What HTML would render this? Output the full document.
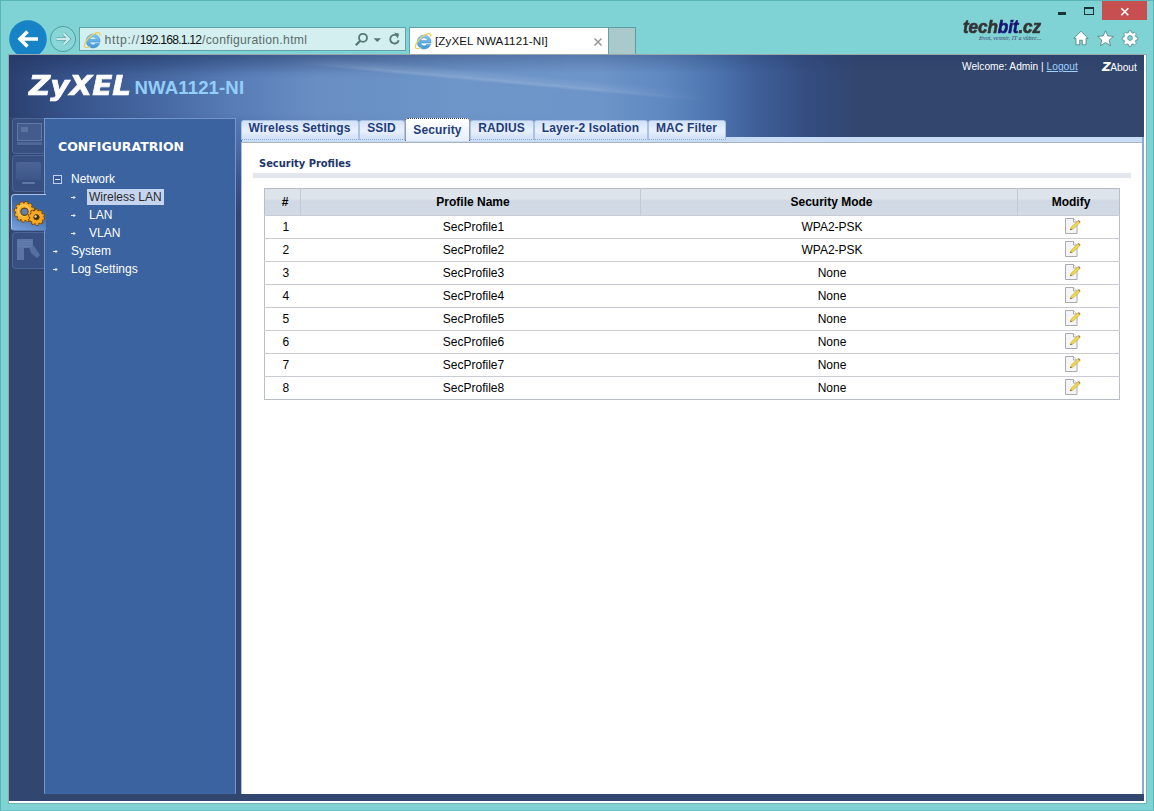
<!DOCTYPE html>
<html lang="en">
<head>
<meta charset="utf-8">
<title>[ZyXEL NWA1121-NI]</title>
<style>
*{box-sizing:border-box;margin:0;padding:0}
html,body{width:1154px;height:811px;overflow:hidden}
body{position:relative;background:#80d3d4;font-family:"Liberation Sans",sans-serif;font-size:12px;color:#000}
.abs{position:absolute}
#frame{left:0;top:0;width:1154px;height:811px;border:1px solid #58b5b8;border-bottom-color:#6cc4c6}
/* browser chrome */
#closebtn{left:1102px;top:1px;width:45px;height:19px;background:#c84f4f}
#addr{left:79px;top:27px;width:327px;height:24px;background:#d3efef;border:1px solid #62a3a7;font-family:"Liberation Sans",sans-serif;font-size:12.200px;color:#5b6b6b;line-height:24px;white-space:nowrap}
#addr span.h{color:#111}
#tab{left:409px;top:27px;width:200px;height:28px;background:#fff;border:1px solid #62a3a7;border-bottom:none;font-size:11.600px;line-height:26px;color:#111;white-space:nowrap}
#newtab{left:609px;top:27px;width:27px;height:27px;background:#a9c9ca;border:1px solid #5a9ea2;border-left:none;border-bottom:none}
#viewport{left:8px;top:54px;width:1139px;height:750px;background:#fff;border:1px solid #9aa6a8;border-right-color:#6fb6b8;border-bottom-color:#6fb6b8;overflow:hidden}

#wm{left:963px;top:14.800px;font-family:"Liberation Sans",sans-serif;font-weight:bold;font-style:italic;font-size:18px;line-height:24px;color:#333;letter-spacing:-.1px;white-space:nowrap;transform-origin:0 0;transform:scaleX(.95);-webkit-text-stroke:.6px currentColor}
#wm span{color:#171773}
#wm2{left:979px;top:34px;font-family:"Liberation Serif",serif;font-style:italic;font-size:6px;line-height:8px;color:#3a3f6a;white-space:nowrap}
.ib{width:32px;border:1px solid #4a6598;border-right:none;border-radius:4px 0 0 4px;background:#38507f}
#actic{left:2px;top:139px;width:35px;height:37px;border:1px solid #a9c4ea;border-right:none;border-bottom-color:#5377b4;border-radius:4px 0 0 4px;background:linear-gradient(20deg,#7aa3dc 0%,#4a74b4 45%,#3a63a0 70%)}
/* page */
#page{left:0;top:0;width:1135px;height:746px;background:#32476f}
#hdr{left:0;top:0;width:1135px;height:82px;background:linear-gradient(90deg,#2b406f 0,#36528a 5%,#44659f 12%,#587db7 20%,#688ec4 27%,#6e96c9 40%,#6d95c9 52%,#5f88c0 57.800%,#4c73ae 62.400%,#3f5f99 65.800%,#344d80 70.400%,#32466e 75%,#32466e 100%)}
#hdr2{left:0;top:0;width:560px;height:82px;background:linear-gradient(180deg,rgba(38,58,104,.55) 0%,rgba(38,58,104,0) 28%,rgba(38,58,104,0) 70%,rgba(38,58,104,.25) 100%);-webkit-mask-image:linear-gradient(90deg,#000 0,#000 20%,transparent 100%);mask-image:linear-gradient(90deg,#000 0,#000 20%,transparent 100%)}
#hdr3{left:0;top:0;width:1135px;height:82px;background:linear-gradient(180deg,rgba(35,55,100,.28) 0,rgba(35,55,100,0) 22%)}
#streak{left:285px;top:-2px;width:420px;height:12px;transform-origin:0 0;transform:rotate(5.200deg);background:linear-gradient(180deg,rgba(255,255,255,0),rgba(255,255,255,.10) 60%,rgba(255,255,255,.16) 75%,rgba(255,255,255,0));-webkit-mask-image:linear-gradient(90deg,transparent,#000 20%,#000 70%,transparent)}
#logo{left:20px;top:11px;font-family:"DejaVu Sans",sans-serif;font-weight:bold;font-style:italic;font-size:26.500px;color:#fff;letter-spacing:0px;line-height:40px;white-space:nowrap;transform-origin:0 0;transform:scaleX(1.11);-webkit-text-stroke:.7px #fff}
#model{left:125.500px;top:21.500px;font-weight:bold;font-size:18.600px;color:#93cff9;line-height:22px;white-space:nowrap;letter-spacing:.12px}
#welcome{left:953px;top:6px;font-size:10.200px;color:#fff;line-height:12px;white-space:nowrap}
#welcome a{color:#9fd0ff;text-decoration:underline}
#about{left:1093px;top:6px;font-size:10.200px;color:#fff;line-height:12px;white-space:nowrap}
#iconcol{left:0;top:62px;width:35px;height:684px;background:#32476f}
#side{left:35px;top:63px;width:192px;height:676px;background:#3a63a0;border:1px solid #7195cc;border-bottom-color:#3f67a4}
#gap{left:227px;top:63px;width:6px;height:676px;background:linear-gradient(180deg,#5378b2 0,#4a6ca6 4%,#3b568c 9%,#32476f 14%,#32476f 100%)}
#cl{left:232px;top:87px;width:1px;height:652px;background:#a9c1e6}
#content{left:233px;top:87px;width:901px;height:652px;background:#fff}
#tabstrip{left:233px;top:82px;width:901px;height:6px;background:#c9dcf6}
#rightline{left:1133px;top:82px;width:2px;height:657px;background:#8fa8cf}
#grayline{left:233px;top:87px;width:900px;height:1px;background:#aab2be}
.stitle{font-family:"Liberation Serif","DejaVu Sans",sans-serif}
#cfg{left:13px;top:21px;font-family:"DejaVu Sans",sans-serif;font-weight:bold;font-size:12.500px;color:#fff;white-space:nowrap;line-height:14px}
.nav{color:#fff;font-size:12px;line-height:14px;white-space:nowrap}
.tabs{left:232px;top:65px;height:21px;white-space:nowrap}
.t{position:absolute;top:0;height:20px;background:linear-gradient(180deg,#d3e2f8 0%,#e8f0fc 55%,#cfe0f8 100%);border:1px solid #a9c3e6;border-bottom:1px dotted #8eaad2;border-radius:3px 3px 0 0;font-weight:bold;font-size:12px;color:#1f3d78;text-align:center;line-height:15px;padding-right:1px;letter-spacing:.12px}
.t.act{background:linear-gradient(180deg,#fff 0%,#e6effc 100%);border:1px dotted #444;border-bottom:none;top:-2px;height:23px;line-height:23px;padding-right:0}
#sec{left:17px;top:15px;font-family:"DejaVu Sans Condensed","DejaVu Sans",sans-serif;font-weight:bold;font-size:11px;color:#1d3569;white-space:nowrap;line-height:13px}
#bar{left:11px;top:31px;width:878px;height:5px;background:#e3e6ec}
table{position:absolute;left:22px;top:46px;width:856px;border-collapse:collapse;border:1px solid #b9bec6;font-size:12px}
th{height:27px;background:linear-gradient(180deg,#dde4ec 0%,#dde4ec 38%,#d0d8e3 42%,#d2dae5 100%);font-weight:bold;border-left:1px solid #c3cad4;text-align:center;vertical-align:middle;padding:0 0 0 5px}
th:first-child{border-left:none}
.ed{display:block;margin:0 auto;position:relative;left:2px;top:-1px}
td{height:23px;text-align:center;vertical-align:middle;border-top:1px solid #c9cdd3;padding:0 0 0 6px}
</style>
</head>
<body>
<div id="frame" class="abs"></div>
<div id="closebtn" class="abs"></div>
<div id="addr" class="abs"><span id="u1" style="margin-left:24.500px;letter-spacing:.68px">http://</span><span id="u2" class="h" style="letter-spacing:-.8px">192.168.1.12</span><span id="u3" style="margin-left:.7px;letter-spacing:.3px">/configuration.html</span></div>
<div id="tab" class="abs"><span style="margin-left:25px;letter-spacing:.1px">[ZyXEL NWA1121-NI]</span></div>
<div id="newtab" class="abs"></div>
<svg class="abs" style="left:8px;top:19px" width="40" height="36" viewBox="0 0 40 36"><circle cx="20" cy="20" r="18.8" fill="#1583c6"/><path d="M30 20H12.5M19.5 12.5L12 20l7.5 7.5" fill="none" stroke="#fff" stroke-width="3.6" stroke-linecap="butt" stroke-linejoin="miter"/></svg>
<svg class="abs" style="left:49px;top:25px" width="28" height="28" viewBox="0 0 28 28"><circle cx="14" cy="14" r="12.6" fill="#8ad6d7" stroke="#4b9ea3" stroke-width="1"/><path d="M7.5 14H19M14.5 8.500L20 14l-5.500 5.500" fill="none" stroke="#5fa9ad" stroke-width="3.600"/><path d="M7.500 14H19M14.500 8.500L20 14l-5.500 5.500" fill="none" stroke="#cfeaea" stroke-width="2.200"/></svg>
<svg class="abs ie" style="left:82.500px;top:30.500px" width="18" height="18" viewBox="0 0 18 18"><linearGradient id="ieg1" x1="0" y1="0" x2="0" y2="1"><stop offset="0" stop-color="#86cbf4"/><stop offset="1" stop-color="#3f97da"/></linearGradient><g transform="translate(.6 .4) scale(1.05)"><path d="M9 2.600a6.600 6.600 0 1 0 6.200 8.900h-3.600a3.300 3.300 0 0 1-5.900-1.300h9.900a6.600 6.600 0 0 0-6.600-7.600zM5.700 7.800a3.300 3.300 0 0 1 6.500 0z" fill="url(#ieg1)" stroke="#3a8ccc" stroke-width=".5"/></g><path d="M1.800 16.200c-1.600-1.800 1.200-7.200 5.600-10.800 3.600-2.900 7.800-4.600 9.200-3.100.5.600.3 1.500-.1 2.300" fill="none" stroke="#ecd155" stroke-width="1.300"/><path d="M1.800 16.200c1.100 1.100 3.600.3 5.500-1" fill="none" stroke="#e9c44a" stroke-width="1"/></svg>
<svg class="abs ie" style="left:414px;top:32px" width="18" height="18" viewBox="0 0 18 18"><linearGradient id="ieg2" x1="0" y1="0" x2="0" y2="1"><stop offset="0" stop-color="#86cbf4"/><stop offset="1" stop-color="#3f97da"/></linearGradient><g transform="translate(.6 .4) scale(1.05)"><path d="M9 2.600a6.600 6.600 0 1 0 6.200 8.900h-3.600a3.300 3.300 0 0 1-5.900-1.300h9.900a6.600 6.600 0 0 0-6.600-7.600zM5.700 7.800a3.300 3.300 0 0 1 6.500 0z" fill="url(#ieg2)" stroke="#3a8ccc" stroke-width=".5"/></g><path d="M1.800 16.200c-1.600-1.800 1.200-7.200 5.600-10.800 3.600-2.900 7.800-4.600 9.200-3.100.5.600.3 1.500-.1 2.300" fill="none" stroke="#ecd155" stroke-width="1.300"/><path d="M1.800 16.200c1.100 1.100 3.600.3 5.500-1" fill="none" stroke="#e9c44a" stroke-width="1"/></svg>

<svg class="abs" style="left:354px;top:32px" width="48" height="16" viewBox="0 0 48 16"><circle cx="9" cy="5.800" r="4" fill="none" stroke="#55777a" stroke-width="1.800"/><path d="M6.300 8.700L1.800 13.300" stroke="#55777a" stroke-width="2.200"/><path d="M19.600 6.200h7.400l-3.700 3.700z" fill="#55777a"/><path d="M43.800 4.400a4.300 4.300 0 1 0 .9 3.800" fill="none" stroke="#55777a" stroke-width="1.800"/><path d="M40.200 0.600l4.900 1.200-1.200 4.700z" fill="#55777a"/></svg>
<svg class="abs" style="left:592px;top:35.500px" width="12" height="12" viewBox="0 0 12 12"><path d="M2.500 2.500l7 7M9.500 2.500l-7 7" stroke="#999" stroke-width="1.600"/></svg>
<div class="abs" style="left:1058px;top:12px;width:8px;height:3px;background:#173436"></div>
<div class="abs" style="left:1084px;top:7px;width:10px;height:8px;border:1px solid #173436;border-top-width:2px"></div>
<svg class="abs" style="left:1120px;top:7px" width="11" height="11" viewBox="0 0 11 11"><path d="M1.300 1.300l7 7M8.300 1.300l-7 7" stroke="#fff" stroke-width="1.600"/></svg>
<svg class="abs" style="left:1072px;top:29px" width="18" height="18" viewBox="0 0 18 18"><path d="M9 2.200L1.800 9.400h2.200v6.400h3.700v-4.600h2.600v4.600h3.700V9.400h2.200z" fill="#fff" stroke="#3b7073" stroke-width=".7" stroke-linejoin="round"/></svg>
<svg class="abs" style="left:1096px;top:29px" width="19" height="18" viewBox="0 0 19 18"><path d="M9.500 1.800l2.300 5.100 5.600.5-4.200 3.700 1.300 5.500-5-3-5 3 1.300-5.500L1.600 7.400l5.600-.5z" fill="#fff" stroke="#3b7073" stroke-width=".7" stroke-linejoin="round"/></svg>
<svg class="abs" style="left:1121px;top:29px" width="18" height="18" viewBox="0 0 18 18"><g transform="translate(9 9) scale(.9)"><path d="M-1.400-8h2.800l.4 2 1.600.7 1.700-1.200 2 2-1.200 1.700.7 1.600 2 .4v2.800l-2 .4-.7 1.600 1.200 1.700-2 2-1.700-1.200-1.600.7-.4 2h-2.800l-.4-2-1.600-.7-1.700 1.200-2-2 1.200-1.700-.7-1.600-2-.4v-2.800l2-.4.700-1.600-1.200-1.700 2-2 1.700 1.200 1.600-.7z" fill="#fff" stroke="#3b7073" stroke-width=".7" stroke-linejoin="round"/><circle r="2.700" fill="#80d3d4" stroke="#3b7073" stroke-width=".7"/></g></svg>
<div class="abs" id="wm">tech<span>bit</span>.cz</div>
<div class="abs" id="wm2">život, vesmír, IT a vůbec...</div>


<div id="viewport" class="abs">
 <div id="page" class="abs">
  <div id="hdr" class="abs"></div>
  <div id="hdr2" class="abs"></div>
  <div id="hdr3" class="abs"></div>
  <div id="streak" class="abs"></div>
  <div id="logo" class="abs">ZyXEL</div>
  <div id="model" class="abs">NWA1121-NI</div>
  <div id="welcome" class="abs">Welcome: Admin | <a>Logout</a></div>
  <div id="about" class="abs"><b style="font-size:12px;font-family:'DejaVu Sans',sans-serif;font-style:italic;letter-spacing:-.5px">Z</b>About</div>
  <div id="iconcol" class="abs">
   <div class="abs ib" style="left:3px;top:1px;height:36px"></div>
   <div class="abs ib" style="left:3px;top:38px;height:37px"></div>
   <div class="abs ib" style="left:3px;top:115px;height:37px"></div>
   <div class="abs" style="left:8px;top:6px;width:25px;height:18px;background:#435c8c;border:1px solid #6079a6;filter:blur(.4px)"></div>
   <div class="abs" style="left:12px;top:10px;width:7px;height:5px;background:#6d84ad;opacity:.6;filter:blur(.5px)"></div>
   <div class="abs" style="left:8px;top:25px;width:25px;height:3px;background:#4f6896;filter:blur(.4px)"></div>
   <div class="abs" style="left:7px;top:45px;width:25px;height:18px;background:linear-gradient(180deg,#4a6596,#3c5688);border-radius:2px"></div>
   <div class="abs" style="left:13px;top:65px;width:13px;height:2px;background:#5e78a6;border-radius:1px"></div>
   <svg class="abs" style="left:8px;top:122px;filter:blur(.5px)" width="26" height="24" viewBox="0 0 26 24"><path d="M0 0h16v9h-9v12h-7z" fill="#5a75a5"/><path d="M12 8l5-1 6 9-3 3-6-5z" fill="#55709f"/><path d="M1 2.500h14M1 5h14M1 7.500h14" stroke="#6c86b3" stroke-width="1" opacity=".7"/></svg>
</div>
  <div id="side" class="abs">
   <div id="cfg" class="abs">CONFIGURATRION</div>
   <div class="abs" style="left:8px;top:56px;width:9px;height:9px;border:1px solid #bfd2ef;background:#35599a"><div class="abs" style="left:1px;top:3px;width:5px;height:1px;background:#dfe9f8"></div></div>
   <svg class="abs arr" style="left:25px;top:75px" width="7" height="7" viewBox="0 0 7 7"><path d="M1 3.500h4.500M4 2v3" stroke="#e4ecfa" stroke-width="1" fill="none"/></svg>
   <svg class="abs arr" style="left:25px;top:93px" width="7" height="7" viewBox="0 0 7 7"><path d="M1 3.500h4.500M4 2v3" stroke="#e4ecfa" stroke-width="1" fill="none"/></svg>
   <svg class="abs arr" style="left:25px;top:111px" width="7" height="7" viewBox="0 0 7 7"><path d="M1 3.500h4.500M4 2v3" stroke="#e4ecfa" stroke-width="1" fill="none"/></svg>
   <svg class="abs arr" style="left:7px;top:129px" width="7" height="7" viewBox="0 0 7 7"><path d="M1 3.500h4.500M4 2v3" stroke="#e4ecfa" stroke-width="1" fill="none"/></svg>
   <svg class="abs arr" style="left:7px;top:147px" width="7" height="7" viewBox="0 0 7 7"><path d="M1 3.500h4.500M4 2v3" stroke="#e4ecfa" stroke-width="1" fill="none"/></svg>
   

   <div class="nav abs" style="left:26px;top:53px">Network</div>
   <div class="nav abs" style="left:42px;top:70px;background:#c5d5f0;color:#2a2a2a;padding:1px 2px 0 2px;height:16px;width:77px">Wireless LAN</div>
   <div class="nav abs" style="left:44px;top:89px">LAN</div>
   <div class="nav abs" style="left:44px;top:107px">VLAN</div>
   <div class="nav abs" style="left:26px;top:125px">System</div>
   <div class="nav abs" style="left:26px;top:143px">Log Settings</div>
  </div>
   <div class="abs" id="actic"></div>
   <svg class="abs" style="left:2.500px;top:142.500px" width="37" height="33" viewBox="0 0 34 30"><g id="gearA"><circle cx="11.500" cy="12.500" r="7.200" fill="none" stroke="#6e4308" stroke-width="5.400" stroke-dasharray="2.200 1.570"/><circle cx="11.500" cy="12.500" r="6.300" fill="none" stroke="#6e4308" stroke-width="5.200"/><circle cx="11.500" cy="12.500" r="7.200" fill="none" stroke="#f7a81c" stroke-width="3.800" stroke-dasharray="2.200 1.570"/><circle cx="11.500" cy="12.500" r="5.700" fill="none" stroke="#f9b32b" stroke-width="4.200"/><circle cx="10.600" cy="11.400" r="5" fill="none" stroke="#fdd470" stroke-width="1.200" opacity=".8"/><circle cx="11.500" cy="12.500" r="3.300" fill="#5f82b8" stroke="#6e4308" stroke-width="1"/></g><g><circle cx="22.500" cy="17.500" r="5.500" fill="none" stroke="#6e4308" stroke-width="4.800" stroke-dasharray="1.900 1.555"/><circle cx="22.500" cy="17.500" r="4.800" fill="none" stroke="#6e4308" stroke-width="4.400"/><circle cx="22.500" cy="17.500" r="5.500" fill="none" stroke="#f39a12" stroke-width="3.200" stroke-dasharray="1.900 1.555"/><circle cx="22.500" cy="17.500" r="4.300" fill="none" stroke="#f7a820" stroke-width="3.400"/><circle cx="22.500" cy="17.500" r="2.400" fill="#3a2a10" stroke="#6e4308" stroke-width=".8"/><circle cx="21.700" cy="16.800" r="1.100" fill="#e8d8a8"/></g></svg>
  <div id="gap" class="abs"></div>
  <div id="cl" class="abs"></div>
  <div id="tabstrip" class="abs"></div>
  <div id="content" class="abs">
   <div id="sec" class="abs">Security Profiles</div>
   <div id="bar" class="abs"></div>
   <table>
    <tr><th style="width:36px">#</th><th style="width:340px">Profile Name</th><th style="width:377px">Security Mode</th><th>Modify</th></tr>
    <tr><td>1</td><td>SecProfile1</td><td>WPA2-PSK</td><td><svg class="ed" width="18" height="18" viewBox="0 0 18 18"><path d="M1.500 1.500h8l3.500 3.500v11.500h-11.500z" fill="#f5f5f8" stroke="#a9a9b0" stroke-width="1"/><path d="M9.500 1.500v3.500h3.500" fill="#fff" stroke="#a9a9b0" stroke-width="1"/><g transform="translate(6.300 12.900) scale(.9) translate(-6.300 -12.900)"><path d="M6.300 12.900l1-3.100 7.600-7 2 2.200-7.600 7z" fill="#f1d94a" stroke="#b89a2a" stroke-width=".6"/><path d="M14.900 2.800l.9-.8 2 2.200-.9.800z" fill="#9a7a4a"/><path d="M6.300 12.900l.5-1.600 1.100 1.200z" fill="#333"/></g></svg></td></tr>
    <tr><td>2</td><td>SecProfile2</td><td>WPA2-PSK</td><td><svg class="ed" width="18" height="18" viewBox="0 0 18 18"><path d="M1.500 1.500h8l3.500 3.500v11.500h-11.500z" fill="#f5f5f8" stroke="#a9a9b0" stroke-width="1"/><path d="M9.500 1.500v3.500h3.500" fill="#fff" stroke="#a9a9b0" stroke-width="1"/><g transform="translate(6.300 12.900) scale(.9) translate(-6.300 -12.900)"><path d="M6.300 12.900l1-3.100 7.600-7 2 2.200-7.600 7z" fill="#f1d94a" stroke="#b89a2a" stroke-width=".6"/><path d="M14.900 2.800l.9-.8 2 2.200-.9.800z" fill="#9a7a4a"/><path d="M6.300 12.900l.5-1.600 1.100 1.200z" fill="#333"/></g></svg></td></tr>
    <tr><td>3</td><td>SecProfile3</td><td>None</td><td><svg class="ed" width="18" height="18" viewBox="0 0 18 18"><path d="M1.500 1.500h8l3.500 3.500v11.500h-11.500z" fill="#f5f5f8" stroke="#a9a9b0" stroke-width="1"/><path d="M9.500 1.500v3.500h3.500" fill="#fff" stroke="#a9a9b0" stroke-width="1"/><g transform="translate(6.300 12.900) scale(.9) translate(-6.300 -12.900)"><path d="M6.300 12.900l1-3.100 7.600-7 2 2.200-7.600 7z" fill="#f1d94a" stroke="#b89a2a" stroke-width=".6"/><path d="M14.900 2.800l.9-.8 2 2.200-.9.800z" fill="#9a7a4a"/><path d="M6.300 12.900l.5-1.600 1.100 1.200z" fill="#333"/></g></svg></td></tr>
    <tr><td>4</td><td>SecProfile4</td><td>None</td><td><svg class="ed" width="18" height="18" viewBox="0 0 18 18"><path d="M1.500 1.500h8l3.500 3.500v11.500h-11.500z" fill="#f5f5f8" stroke="#a9a9b0" stroke-width="1"/><path d="M9.500 1.500v3.500h3.500" fill="#fff" stroke="#a9a9b0" stroke-width="1"/><g transform="translate(6.300 12.900) scale(.9) translate(-6.300 -12.900)"><path d="M6.300 12.900l1-3.100 7.600-7 2 2.200-7.600 7z" fill="#f1d94a" stroke="#b89a2a" stroke-width=".6"/><path d="M14.900 2.800l.9-.8 2 2.200-.9.800z" fill="#9a7a4a"/><path d="M6.300 12.900l.5-1.600 1.100 1.200z" fill="#333"/></g></svg></td></tr>
    <tr><td>5</td><td>SecProfile5</td><td>None</td><td><svg class="ed" width="18" height="18" viewBox="0 0 18 18"><path d="M1.500 1.500h8l3.500 3.500v11.500h-11.500z" fill="#f5f5f8" stroke="#a9a9b0" stroke-width="1"/><path d="M9.500 1.500v3.500h3.500" fill="#fff" stroke="#a9a9b0" stroke-width="1"/><g transform="translate(6.300 12.900) scale(.9) translate(-6.300 -12.900)"><path d="M6.300 12.900l1-3.100 7.600-7 2 2.200-7.600 7z" fill="#f1d94a" stroke="#b89a2a" stroke-width=".6"/><path d="M14.900 2.800l.9-.8 2 2.200-.9.800z" fill="#9a7a4a"/><path d="M6.300 12.900l.5-1.600 1.100 1.200z" fill="#333"/></g></svg></td></tr>
    <tr><td>6</td><td>SecProfile6</td><td>None</td><td><svg class="ed" width="18" height="18" viewBox="0 0 18 18"><path d="M1.500 1.500h8l3.500 3.500v11.500h-11.500z" fill="#f5f5f8" stroke="#a9a9b0" stroke-width="1"/><path d="M9.500 1.500v3.500h3.500" fill="#fff" stroke="#a9a9b0" stroke-width="1"/><g transform="translate(6.300 12.900) scale(.9) translate(-6.300 -12.900)"><path d="M6.300 12.900l1-3.100 7.600-7 2 2.200-7.600 7z" fill="#f1d94a" stroke="#b89a2a" stroke-width=".6"/><path d="M14.900 2.800l.9-.8 2 2.200-.9.800z" fill="#9a7a4a"/><path d="M6.300 12.900l.5-1.600 1.100 1.200z" fill="#333"/></g></svg></td></tr>
    <tr><td>7</td><td>SecProfile7</td><td>None</td><td><svg class="ed" width="18" height="18" viewBox="0 0 18 18"><path d="M1.500 1.500h8l3.500 3.500v11.500h-11.500z" fill="#f5f5f8" stroke="#a9a9b0" stroke-width="1"/><path d="M9.500 1.500v3.500h3.500" fill="#fff" stroke="#a9a9b0" stroke-width="1"/><g transform="translate(6.300 12.900) scale(.9) translate(-6.300 -12.900)"><path d="M6.300 12.900l1-3.100 7.600-7 2 2.200-7.600 7z" fill="#f1d94a" stroke="#b89a2a" stroke-width=".6"/><path d="M14.900 2.800l.9-.8 2 2.200-.9.800z" fill="#9a7a4a"/><path d="M6.300 12.900l.5-1.600 1.100 1.200z" fill="#333"/></g></svg></td></tr>
    <tr><td>8</td><td>SecProfile8</td><td>None</td><td><svg class="ed" width="18" height="18" viewBox="0 0 18 18"><path d="M1.500 1.500h8l3.500 3.500v11.500h-11.500z" fill="#f5f5f8" stroke="#a9a9b0" stroke-width="1"/><path d="M9.500 1.500v3.500h3.500" fill="#fff" stroke="#a9a9b0" stroke-width="1"/><g transform="translate(6.300 12.900) scale(.9) translate(-6.300 -12.900)"><path d="M6.300 12.900l1-3.100 7.600-7 2 2.200-7.600 7z" fill="#f1d94a" stroke="#b89a2a" stroke-width=".6"/><path d="M14.900 2.800l.9-.8 2 2.200-.9.800z" fill="#9a7a4a"/><path d="M6.300 12.900l.5-1.600 1.100 1.200z" fill="#333"/></g></svg></td></tr>
   </table>
  </div>
  <div class="tabs abs">
   <div class="t" style="left:0;width:118px">Wireless Settings</div>
   <div class="t" style="left:118px;width:46px">SSID</div>
   <div class="t act" style="left:164px;width:65px">Security</div>
   <div class="t" style="left:229px;width:64px">RADIUS</div>
   <div class="t" style="left:293px;width:114px">Layer-2 Isolation</div>
   <div class="t" style="left:407px;width:78px">MAC Filter</div>
  </div>
  <div id="rightline" class="abs"></div>
  <div id="grayline" class="abs"></div>
 </div>
</div>
</body>
</html>
